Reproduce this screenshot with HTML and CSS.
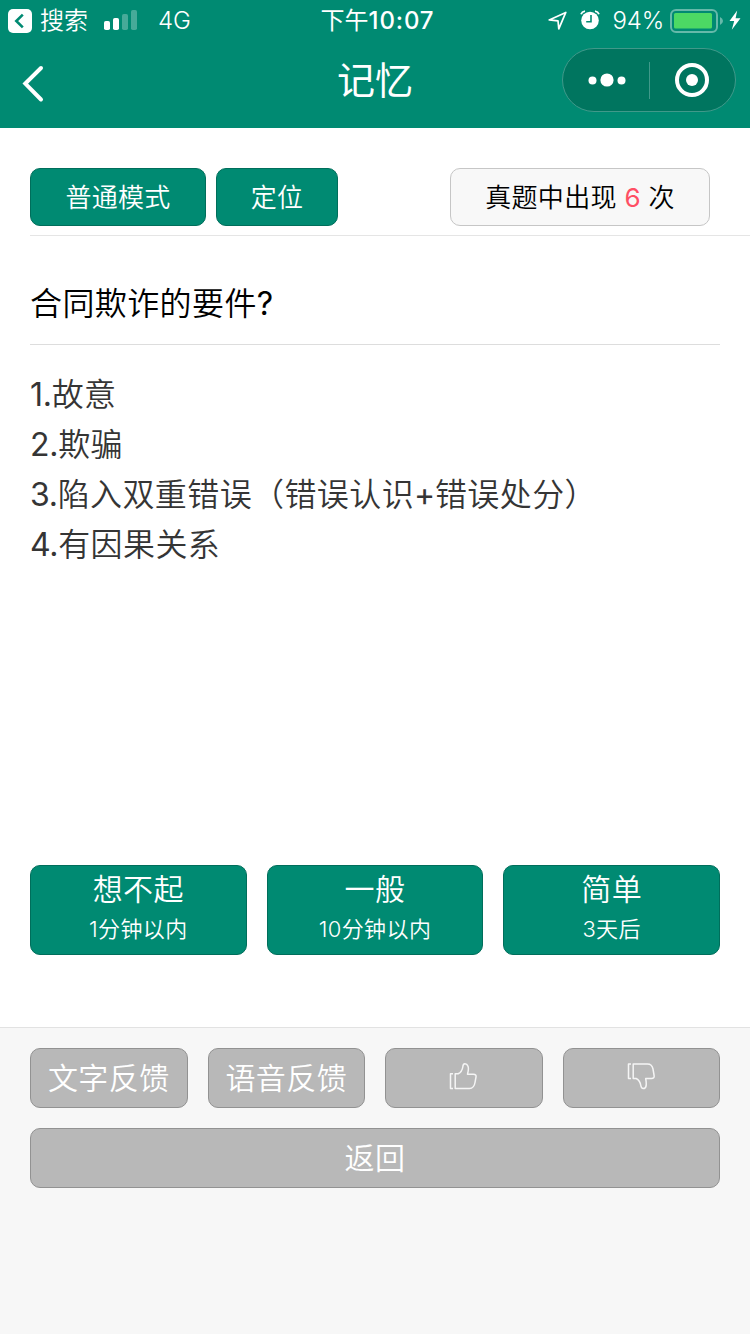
FILE: index.html
```html
<!DOCTYPE html>
<html lang="zh-CN">
<head>
<meta charset="UTF-8">
<meta name="viewport" content="width=device-width, initial-scale=1.0">
<title>记忆</title>
<link rel="stylesheet" href="styles.css">
</head>
<body>
<header class="header">
    <div class="status">
        <div class="status-left">
            <svg class="back-app" width="24" height="24" viewBox="0 0 24 24">
                <rect width="24" height="24" rx="5" fill="#fff"/>
                <path d="M14.8 5.6 8.3 12l6.5 6.4" fill="none" stroke="#008a72" stroke-width="2.6"/>
            </svg>
            <span class="app-name">搜索</span>
            <svg class="signal" width="34" height="20" viewBox="0 0 34 20" fill="#fff">
                <rect x="0" y="11" width="6" height="9" rx="1.8"/>
                <rect x="9" y="8" width="6" height="12" rx="1.8"/>
                <rect x="18" y="4" width="6" height="16" rx="1.8" opacity=".28"/>
                <rect x="27" y="0" width="6" height="20" rx="1.8" opacity=".28"/>
            </svg>
            <span class="network">4G</span>
        </div>
        <div class="time">下午<span class="clock">10:07</span></div>
        <div class="status-right">
            <svg class="location" width="20" height="20" viewBox="0 0 20 20">
                <path d="M1.2 9.9 17.8 2.4 10.8 18.8 10 10.8Z" fill="none" stroke="#fff" stroke-width="1.7" stroke-linejoin="round"/>
            </svg>
            <svg class="alarm" width="20" height="20" viewBox="0 0 20 20">
                <circle cx="10" cy="10.5" r="8.8" fill="#fff"/>
                <path d="M1 4.2Q2 1.6 5 1.1M19 4.2Q18 1.6 15 1.1" fill="none" stroke="#fff" stroke-width="1.8"/>
                <path d="M11 5v6.7H6.2" fill="none" stroke="#008a72" stroke-width="1.6"/>
            </svg>
            <span class="percent">94%</span>
            <svg class="battery" width="53" height="24" viewBox="0 0 53 24">
                <rect x="1" y="1" width="46" height="22" rx="5" fill="none" stroke="#fff" stroke-opacity=".4" stroke-width="2"/>
                <rect x="4" y="4" width="38" height="15.5" rx="1.5" fill="#4cd964"/>
                <path d="M50 8q3 1.5 3 4t-3 4z" fill="#fff" opacity=".4"/>
            </svg>
            <svg class="bolt" width="12" height="20" viewBox="0 0 12 20">
                <path d="M8.2.5.5 11h4.7L2.8 19.8 11.5 8.3H6.6Z" fill="#fff"/>
            </svg>
        </div>
    </div>
    <div class="nav">
        <svg class="nav-back" width="24" height="38" viewBox="0 0 24 38">
            <path d="M20 3 4.3 18.600 20 34.500" fill="none" stroke="#fff" stroke-width="4" stroke-linecap="round"/>
        </svg>
        <h1 class="title">记忆</h1>
        <div class="capsule">
            <svg width="38" height="14" viewBox="0 0 38 14" fill="#fff">
                <circle cx="4.5" cy="7.5" r="4"/>
                <circle cx="19" cy="7" r="6.6"/>
                <circle cx="33.5" cy="7.5" r="4"/>
            </svg>
            <span class="capsule-line"></span>
            <svg width="34" height="34" viewBox="0 0 34 34">
                <circle cx="17" cy="17" r="15" fill="none" stroke="#fff" stroke-width="4"/>
                <circle cx="17" cy="17" r="6" fill="#fff"/>
            </svg>
        </div>
    </div>
</header>

<main class="content">
    <div class="toolbar">
        <button class="btn btn-mini btn-mode">普通模式</button>
        <button class="btn btn-mini btn-locate">定位</button>
        <button class="btn btn-mini btn-count">真题中出现 <span class="count">6</span> 次</button>
    </div>
    <h2 class="question">合同欺诈的要件<span class="latin">?</span></h2>
    <div class="answer">
        <p><span class="latin">1.</span>故意</p>
        <p><span class="latin">2.</span>欺骗</p>
        <p><span class="latin">3.</span>陷入双重错误（错误认识<span class="latin">+</span>错误处分）</p>
        <p><span class="latin">4.</span>有因果关系</p>
    </div>
    <div class="levels">
        <button class="btn btn-level">想不起<small>1分钟以内</small></button>
        <button class="btn btn-level">一般<small>10分钟以内</small></button>
        <button class="btn btn-level">简单<small>3天后</small></button>
    </div>
</main>

<footer class="footer">
    <div class="feedback">
        <button class="btn btn-gray">文字反馈</button>
        <button class="btn btn-gray">语音反馈</button>
        <button class="btn btn-gray btn-icon">
            <svg class="thumb" width="28" height="28" viewBox="0 0 28 28">
                <path d="M4 10.8H1.5V25.5H4M6.2 10.8V25.5H20.5Q25 25.5 26 19.5L27 14Q27.5 11.3 24.5 11.3H18.5Q20 6 19 3.2Q18 .7 15.8.8Q14 1 13.8 4Q13 9 9.2 10.8Z"/>
            </svg>
        </button>
        <button class="btn btn-gray btn-icon">
            <svg class="thumb" width="28" height="28" viewBox="0 0 28 28">
                <path d="M4 1H1.5V15.5H4M6.2 1V15.5H9.2Q13 17.5 13.8 22.5Q14.2 25.5 16.3 25.5Q18.6 25.5 19.1 23Q19.5 20 18.7 15.5H24.5Q27.5 15.5 27.1 12.5L26 6Q25 1 20.5 1Z"/>
            </svg>
        </button>
    </div>
    <button class="btn btn-gray">返回</button>
</footer>
</body>
</html>
```

FILE: styles.css
```css
* {
    margin: 0;
    padding: 0;
    box-sizing: border-box;
}
body {
    width: 750px;
    height: 1334px;
    display: flex;
    flex-direction: column;
    overflow: hidden;
    background: #fff;
    color: #000;
    font-family: Inter, 'Noto Sans CJK SC', sans-serif;
    font-weight: 350;
}
.header {
    height: 128px;
    background: #008a72;
    color: #fff;
}
.status {
    height: 40px;
    display: grid;
    grid-template-columns: 1fr auto 1fr;
    align-items: center;
    padding: 1px 9px 0 8px;
    font-size: 24px;
    line-height: 38px;
}
.status-left, .status-right {
    display: flex;
    align-items: center;
}
.status-right {
    justify-content: flex-end;
}
.app-name {
    margin-left: 8px;
}
.signal {
    margin-left: 16px;
    margin-top: -1px;
}
.network {
    margin-left: 20px;
}
.time {
    padding-left: 6px;
    font-weight: 400;
}
.clock {
    font-weight: 500;
    letter-spacing: 0.9px;
}
.location, .alarm {
    margin-top: -1px;
}
.alarm {
    margin-left: 12px;
}
.percent {
    margin-left: 13px;
    letter-spacing: -0.2px;
}
.battery {
    margin-left: 6px;
}
.bolt {
    margin-left: 6px;
    margin-top: -1px;
}
.nav {
    height: 88px;
    display: grid;
    grid-template-columns: 1fr auto 1fr;
    align-items: center;
    padding: 0 14px 8px 21px;
}
.nav-back {
    margin-top: 8px;
}
.title {
    margin-right: 7px;
    font-size: 38px;
    font-weight: 400;
    line-height: 60px;
}
.capsule {
    width: 174px;
    height: 64px;
    display: flex;
    align-items: center;
    justify-self: end;
    padding-left: 25px;
    border: 1px solid #40998a;
    border-radius: 32px;
    background: #00755f;
}
.capsule-line {
    width: 1px;
    height: 37px;
    margin: 0 25px 0 23px;
    background: #40998a;
}
.content {
    flex: 1;
    display: flex;
    flex-direction: column;
    padding: 40px 30px 72px;
}
.btn {
    border: 1px solid #006e5b;
    border-radius: 10px;
    background: #008a72;
    color: #fff;
    font-family: inherit;
    font-weight: inherit;
    text-align: center;
}
.toolbar {
    display: flex;
    gap: 10px;
    height: 68px;
    margin-right: -30px;
    padding-right: 40px;
    padding-bottom: 9px;
    border-bottom: 1px solid #e5e5e5;
}
.btn-mini {
    height: 58px;
    padding-top: 2px;
    font-size: 26px;
    line-height: 54px;
    letter-spacing: 0.3px;
}
.btn-mode {
    width: 176px;
}
.btn-locate {
    width: 122px;
}
.btn-count {
    width: 260px;
    margin-left: auto;
    border-color: #c6c6c6;
    background: #f8f8f8;
    color: #000;
}
.count {
    color: #ff4f64;
    font-weight: 400;
}
.question {
    height: 109px;
    padding-top: 43px;
    border-bottom: 1px solid #ddd;
    font-size: 32px;
    font-weight: 350;
    line-height: 50px;
    letter-spacing: 0.4px;
}
.latin {
    font-weight: 400;
    letter-spacing: -0.3px;
}
.answer {
    padding-top: 25px;
    color: #353535;
    font-size: 32px;
    line-height: 50px;
    letter-spacing: 0.4px;
}
.levels {
    display: grid;
    grid-template-columns: repeat(3, 1fr);
    gap: 20px;
    margin-top: auto;
}
.btn-level {
    height: 90px;
    padding-bottom: 8px;
    font-size: 30px;
    line-height: 46px;
    letter-spacing: 0.4px;
}
.btn-level small {
    display: block;
    font-size: 22px;
    line-height: 34px;
}
.footer {
    height: 307px;
    display: flex;
    flex-direction: column;
    gap: 20px;
    padding: 20px 30px;
    border-top: 1px solid #e2e2e2;
    background: #f7f7f7;
}
.feedback {
    display: grid;
    grid-template-columns: repeat(4, 1fr);
    gap: 20px;
}
.btn-gray {
    height: 60px;
    border-color: #929292;
    background: #b8b8b8;
    font-size: 30px;
    line-height: 58px;
    letter-spacing: 0.4px;
}
.btn-icon {
    display: flex;
    justify-content: center;
    padding: 14px 1px 0 0;
}
.thumb {
    fill: none;
    stroke: #f5f5f5;
    stroke-width: 1.5;
    stroke-linejoin: round;
}
```
